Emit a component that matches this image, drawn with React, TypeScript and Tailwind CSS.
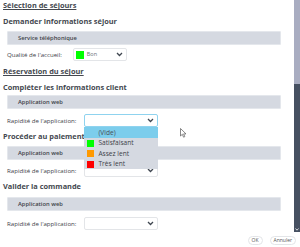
import React from 'react';

const font = { fontFamily: '"Open Sans", "DejaVu Sans", sans-serif' };

const Chevron = () => (
  <svg width="7" height="5" viewBox="0 0 7 5" className="shrink-0">
    <path d="M1 1 L3.5 3.5 L6 1" fill="none" stroke="#3f4650" strokeWidth="1.3" />
  </svg>
);

const Bar: React.FC<{ label: string }> = ({ label }) => (
  <div className="ml-[7px] mr-[13px] h-[14px] flex items-center pl-[10px] bg-[#d5d9e1] border border-[#e4e7ec] rounded-[1px] text-[5.8px] font-semibold text-[#3d4148]">
    {label}
  </div>
);

const Select: React.FC<{ children?: React.ReactNode; focused?: boolean; w: string }> = ({ children, focused, w }) => (
  <div
    className={`${w} h-[13px] flex items-center justify-between px-[2px] pr-[3px] bg-white rounded-[2px] border ${
      focused ? 'border-[#8fd3ef]' : 'border-[#e3e5e8]'
    }`}
  >
    <div className="flex items-center gap-[3px]">{children}</div>
    <Chevron />
  </div>
);

const Heading: React.FC<{ text: string; underline?: boolean }> = ({ text, underline }) => (
  <div className={`pl-[3px] h-[12px] flex items-center text-[7.4px] font-bold text-[#44484f] ${underline ? 'underline' : ''}`}>
    {text}
  </div>
);

const Row: React.FC<{ label: string; children: React.ReactNode }> = ({ label, children }) => (
  <div className="flex items-center pl-[7px]">
    <span className="text-[6.1px] text-[#3d4148]">{label}</span>
    {children}
  </div>
);

export default function App() {
  return (
    <div className="w-[300px] h-[247px] bg-white relative overflow-hidden" style={font}>
      <div className="flex h-[232px]">
        <div className="flex-1 flex flex-col">
          <Heading text="Sélection de séjours" underline />
          <div className="mt-[4px]"><Heading text="Demander informations séjour" /></div>
          <div className="mt-[3px]"><Bar label="Service téléphonique" /></div>
          <div className="mt-[3px]">
            <Row label="Qualité de l'accueil:">
              <div className="ml-[11px]">
                <Select w="w-[54px]">
                  <span className="w-[8px] h-[8px] bg-[#00ff00] inline-block" />
                  <span className="text-[5.5px] text-[#6b7078]">Bon</span>
                </Select>
              </div>
            </Row>
          </div>
          <div className="mt-[5px]"><Heading text="Réservation du séjour" underline /></div>
          <div className="mt-[4px]"><Heading text="Compléter les informations client" /></div>
          <div className="mt-[1px]"><Bar label="Application web" /></div>
          <div className="mt-[5px]">
            <Row label="Rapidité de l'application:">
              <div className="ml-[8px] relative">
                <Select w="w-[74px]" focused />
                <div className="absolute left-0 top-[13px] w-[74px] bg-[#d5d9e1] z-10 flex flex-col text-[6.6px] text-[#3d4148]">
                  <div className="h-[11px] flex items-center pl-[14px] bg-[#7ccdec] text-[#4a5058]">(Vide)</div>
                  <div className="h-[10px] flex items-center gap-[4px] pl-[3px]">
                    <span className="w-[7px] h-[7px] bg-[#00ff00]" />Satisfaisant
                  </div>
                  <div className="h-[11px] flex items-center gap-[4px] pl-[3px]">
                    <span className="w-[7px] h-[7px] bg-[#ff9900]" />Assez lent
                  </div>
                  <div className="h-[10px] flex items-center gap-[4px] pl-[3px]">
                    <span className="w-[7px] h-[7px] bg-[#ff0000]" />Très lent
                  </div>
                </div>
              </div>
            </Row>
          </div>
          <div className="mt-[4px]"><Heading text="Procéder au paiement" /></div>
          <div className="mt-[3px]"><Bar label="Application web" /></div>
          <div className="mt-[4px]">
            <Row label="Rapidité de l'application:">
              <div className="ml-[8px]"><Select w="w-[74px]" /></div>
            </Row>
          </div>
          <div className="mt-[4px]"><Heading text="Valider la commande" /></div>
          <div className="mt-[4px]"><Bar label="Application web" /></div>
          <div className="mt-[6px]">
            <Row label="Rapidité de l'application:">
              <div className="ml-[8px]"><Select w="w-[74px]" /></div>
            </Row>
          </div>
        </div>
        <div className="w-[6px] flex flex-col">
          <div className="h-[84px] bg-[#a9adc1]" />
          <div className="flex-1 bg-[#465061] flex items-end justify-center pb-[1px]">
            <svg width="4" height="3" viewBox="0 0 4 3">
              <path d="M0.5 0.5 L2 2.2 L3.5 0.5" fill="none" stroke="#ffffff" strokeWidth="0.8" />
            </svg>
          </div>
        </div>
      </div>
      <div className="flex justify-end gap-[7px] pr-[4px] mt-[4px]">
        <button className="h-[9px] px-[3px] rounded-full border border-[#e3e5e8] text-[5px] text-[#555] flex items-center">OK</button>
        <button className="h-[9px] px-[3px] rounded-full border border-[#e3e5e8] text-[5px] text-[#555] flex items-center">Annuler</button>
      </div>
      <svg className="absolute left-[180px] top-[128px]" width="7" height="10" viewBox="0 0 7 10">
        <path d="M0.5 0.5 L0.5 8 L2.3 6.3 L3.6 9.2 L4.8 8.6 L3.6 5.9 L6 5.9 Z" fill="#fff" stroke="#555" strokeWidth="0.7" />
      </svg>
    </div>
  );
}
